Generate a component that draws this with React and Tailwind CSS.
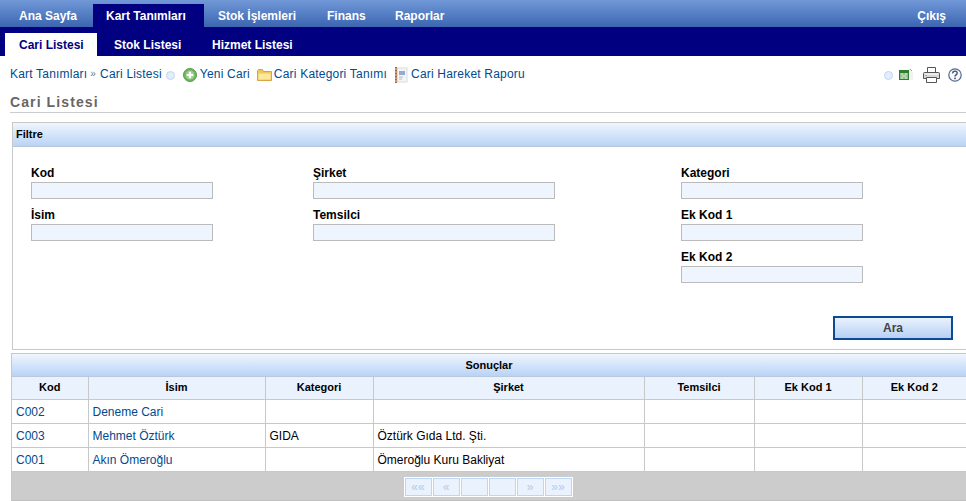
const mainMenu = [
  { label: "Ana Sayfa", box: "w-[93px] pl-[19px]" },
  { label: "Kart Tanımları", box: "w-[111px] pl-[13px]", active: true },
  { label: "Stok İşlemleri", box: "w-[107px] pl-[14px]" },
  { label: "Finans", box: "w-[67px] pl-[16px]" },
  { label: "Raporlar", box: "w-[90px] pl-[17px]" },
];

const subMenu = [
  { label: "Cari Listesi", box: "w-[92px] pl-[14px]", active: true },
  { label: "Stok Listesi", box: "w-[100px] pl-[17px]" },
  { label: "Hizmet Listesi", box: "w-[118px] pl-[15px]" },
];

const filterColumns = [
  { width: "w-[282px]", inputWidth: "w-[182px]", fields: ["Kod", "İsim"] },
  { width: "w-[368px]", inputWidth: "w-[242px]", fields: ["Şirket", "Temsilci"] },
  { width: "w-[182px]", inputWidth: "w-[182px]", fields: ["Kategori", "Ek Kod 1", "Ek Kod 2"] },
];

const columns = [
  { label: "Kod", width: "w-[76px]" },
  { label: "İsim", width: "w-[177px]" },
  { label: "Kategori", width: "w-[108px]" },
  { label: "Şirket", width: "w-[271px]" },
  { label: "Temsilci", width: "w-[110px]" },
  { label: "Ek Kod 1", width: "w-[108px]" },
  { label: "Ek Kod 2", width: "w-[104px]" },
];

const rows = [
  { kod: "C002", isim: "Deneme Cari", kategori: "", sirket: "" },
  { kod: "C003", isim: "Mehmet Öztürk", kategori: "GIDA", sirket: "Öztürk Gıda Ltd. Şti." },
  { kod: "C001", isim: "Akın Ömeroğlu", kategori: "", sirket: "Ömeroğlu Kuru Bakliyat" },
];

const pagerButtons = ["««", "«", "", "", "»", "»»"];

function Dot() {
  return <span className="mt-[2px] block h-[9px] w-[9px] shrink-0 rounded-full border border-[#bcd6f6] bg-[#e4eefb]" />;
}

function PlusIcon() {
  return (
    <svg width="14" height="14" viewBox="0 0 14 14" className="mt-[2px] shrink-0">
      <circle cx="7" cy="7" r="6.5" fill="#6fb35f" stroke="#5b9a55" />
      <circle cx="7" cy="7" r="4.5" fill="#9ccf8e" />
      <path d="M7 3.8v6.4M3.8 7h6.4" stroke="#fff" strokeWidth="2.2" />
    </svg>
  );
}

function FolderIcon() {
  return (
    <svg width="15" height="12" viewBox="0 0 15 12" className="mt-[2px] shrink-0">
      <path d="M.5 1.5V11.5H14.5V2.5H6.5L5.5.5H1.5Z" fill="#f3c65c" stroke="#d9a441" />
      <path d="M1.5 4.5H13.5V10.5H1.5Z" fill="#fbe89c" />
    </svg>
  );
}

function NotebookIcon() {
  return (
    <svg width="14" height="16" viewBox="0 0 14 16" className="mt-[2px] shrink-0">
      <rect x="3" y="1" width="10" height="14" fill="#f4f4f4" stroke="#dcdcdc" />
      <rect x="1" y="0" width="2" height="16" fill="#a8683a" />
      <path d="M1 2h3M1 5h3M1 8h3M1 11h3M1 14h3" stroke="#d9c7ae" />
      <path d="M5 5h6M5 7h6" stroke="#6f94c9" strokeWidth="1.5" />
      <path d="M5 10h4M5 12h3" stroke="#b9b9b9" />
    </svg>
  );
}

function ExcelIcon() {
  return (
    <svg width="15" height="12" viewBox="0 0 15 12" className="mt-[1px] shrink-0">
      <path d="M10 0l4 3v8h-4Z" fill="#f2f2f2" />
      <path d="M11 0l2 2" stroke="#999" />
      <rect x=".5" y="1.5" width="9" height="9" fill="#8fc08a" stroke="#2e7d32" />
      <rect x="1" y="2" width="8" height="2" fill="#2e7d32" />
      <path d="M2 5h2M6 5h2M3 7h4M2 9h2M6 9h2" stroke="#dff0d8" />
    </svg>
  );
}

function PrinterIcon() {
  return (
    <svg width="17" height="16" viewBox="0 0 17 16" className="mt-[2px] shrink-0">
      <path d="M4.5.5h8v5h-8Z" fill="#fff" stroke="#555" />
      <path d="M1.5 5.5h14a1 1 0 011 1v5h-16v-5a1 1 0 011-1Z" fill="#d8d8d8" stroke="#555" />
      <path d="M2 7h13" stroke="#fff" />
      <path d="M3.5 10.5h10v5h-10Z" fill="#fff" stroke="#555" />
      <path d="M2.5 8.5h1" stroke="#4a9a4a" />
    </svg>
  );
}

function HelpIcon() {
  return (
    <svg width="14" height="14" viewBox="0 0 14 14" className="mt-[2px] shrink-0">
      <circle cx="7" cy="7" r="6.2" fill="#f7f9fc" stroke="#56688c" strokeWidth="1.2" />
      <path d="M4.8 5.4a2.2 2 0 114 .8C8.2 7 7 7.2 7 8.6" fill="none" stroke="#3d5076" strokeWidth="1.4" />
      <rect x="6.2" y="9.6" width="1.6" height="1.6" fill="#3d5076" />
    </svg>
  );
}

export default function App() {
  return (
    <div className="h-[501px] w-[966px] overflow-hidden bg-white font-['Liberation_Sans',Arial,sans-serif] text-xs text-black">
      {/* Menu */}
      <div className="flex h-[27px] items-end justify-between bg-gradient-to-b from-[#7199d8] to-[#3c65b1] font-bold text-white">
        <div className="flex">
          {mainMenu.map((item) => (
            <div
              key={item.label}
              className={`flex h-[23px] items-center ${item.box} ${item.active ? "bg-[#000080]" : ""}`}
            >
              {item.label}
            </div>
          ))}
        </div>
        <div className="flex h-[23px] items-center pr-5">Çıkış</div>
      </div>
      <div className="flex h-[29px] items-end bg-[#000080] pl-[5px] font-bold text-white">
        {subMenu.map((item) => (
          <div
            key={item.label}
            className={`flex h-[23px] items-center ${item.box} ${item.active ? "bg-white text-[#000080]" : ""}`}
          >
            {item.label}
          </div>
        ))}
      </div>

      {/* Breadcrumb */}
      <div className="flex h-9 items-center justify-between pl-[10px] pr-[4px] tracking-[0.2px] text-[#004a8f]">
        <div className="flex items-center">
          <span>Kart Tanımları</span>
          <span className="ml-[3px] mr-[4px] text-[10px] text-[#777]">»</span>
          <span>Cari Listesi</span>
          <span className="ml-1 mr-[8px]"><Dot /></span>
          <PlusIcon />
          <span className="ml-[3px] mr-[7px]">Yeni Cari</span>
          <FolderIcon />
          <span className="ml-[2px] mr-[7px]">Cari Kategori Tanımı</span>
          <NotebookIcon />
          <span className="ml-[3px]">Cari Hareket Raporu</span>
        </div>
        <div className="flex items-center">
          <Dot />
          <span className="ml-[6px] mr-[9px]"><ExcelIcon /></span>
          <PrinterIcon />
          <span className="ml-[8px]"><HelpIcon /></span>
        </div>
      </div>

      {/* Title */}
      <div className="ml-[10px] h-[21px] border-b border-[#cccccc] text-sm leading-5 font-bold tracking-[1.1px] text-[#666666]">
        Cari Listesi
      </div>

      {/* Filter */}
      <div className="ml-3 mt-[9px] h-[228px] w-[970px] border border-[#c8c8c8]">
        <div className="flex h-[24px] items-center border-b border-[#b9c9dc] bg-gradient-to-b from-[#f0f6fe] to-[#b9d3f5] pl-[3px] text-[11px] font-bold">
          Filtre
        </div>
        <div className="flex pl-[18px] pt-[18px]">
          {filterColumns.map((column) => (
            <div key={column.fields[0]} className={`flex shrink-0 flex-col gap-[8px] ${column.width}`}>
              {column.fields.map((field) => (
                <label key={field} className="flex h-[34px] flex-col font-bold">
                  <span className="h-[17px] leading-[17px]">{field}</span>
                  <input
                    type="text"
                    className={`h-[17px] border border-[#bbbbbb] bg-[#eef5fe] ${column.inputWidth}`}
                  />
                </label>
              ))}
            </div>
          ))}
        </div>
        <div className="mt-[33px] ml-[820px]">
          <button className="h-[24px] w-[120px] border-2 border-[#0a4a96] bg-gradient-to-b from-[#eaf2fd] to-[#b6d0f4] font-bold text-[#444444]">
            Ara
          </button>
        </div>
      </div>

      {/* Results */}
      <div className="ml-[11px] mt-[3px] w-[955px] border-l border-[#c8c8c8]">
        <div className="flex h-[24px] items-center justify-center border-y border-t-[#c8c8c8] border-b-[#b9c9dc] bg-gradient-to-b from-[#f0f6fe] to-[#b9d3f5] text-[11px] font-bold">
          Sonuçlar
        </div>
        <table className="w-[954px] table-fixed border-collapse">
          <thead>
            <tr className="h-[22px] bg-[#eaf2fd] text-[11px] font-bold">
              {columns.map((column, i) => (
                <th
                  key={column.label}
                  className={`border-b border-[#c8c8c8] text-center ${column.width} ${i < columns.length - 1 ? "border-r" : ""}`}
                >
                  {column.label}
                </th>
              ))}
            </tr>
          </thead>
          <tbody>
            {rows.map((row) => (
              <tr key={row.kod} className="h-[24px]">
                <td className="border-r border-b border-[#c8c8c8] pl-1 pt-[2px] text-[#004a8f]">{row.kod}</td>
                <td className="border-r border-b border-[#c8c8c8] pl-1 pt-[2px] text-[#004a8f]">{row.isim}</td>
                <td className="border-r border-b border-[#c8c8c8] pl-1 pt-[2px]">{row.kategori}</td>
                <td className="border-r border-b border-[#c8c8c8] pl-1 pt-[2px]">{row.sirket}</td>
                <td className="border-r border-b border-[#c8c8c8]"></td>
                <td className="border-r border-b border-[#c8c8c8]"></td>
                <td className="border-b border-[#c8c8c8]"></td>
              </tr>
            ))}
          </tbody>
        </table>
        <div className="flex h-[29px] justify-center border-b border-[#c0c0c0] bg-[#cccccc] pr-[2px] pt-[5px]">
          <div className="flex h-[20px] gap-[1px] bg-white p-[1px]">
            {pagerButtons.map((label, i) => (
              <div
                key={i}
                className="flex h-[18px] w-[27px] items-center justify-center border border-[#bcd6f6] bg-[#eaf2fd] text-[12px] text-[#b4cbe8]"
              >
                {label}
              </div>
            ))}
          </div>
        </div>
      </div>
    </div>
  );
}
